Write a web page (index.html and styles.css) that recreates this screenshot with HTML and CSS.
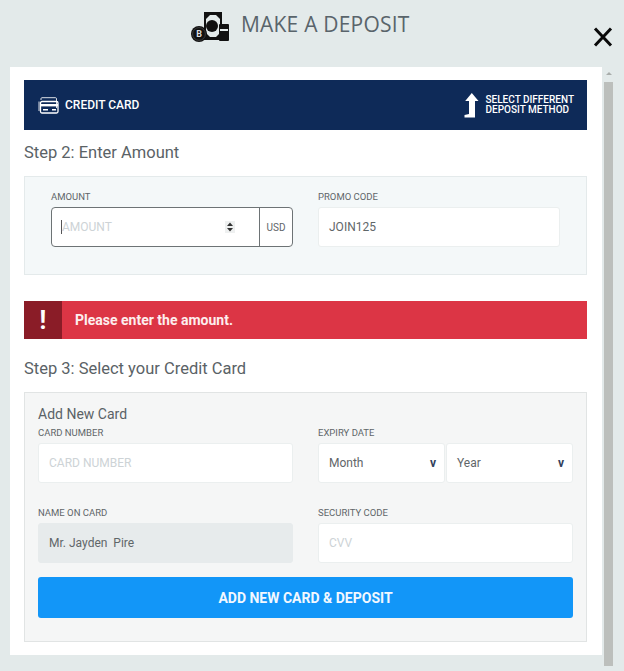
FILE: index.html
```html
<!DOCTYPE html>
<html lang="en">
<head>
    <meta charset="UTF-8">
    <meta name="viewport" content="width=device-width, initial-scale=1.0">
    <title>Make a Deposit</title>
    <link rel="stylesheet" href="styles.css">
</head>
<body>
    <div class="header">
        <svg class="header-icon" width="38" height="30" viewBox="0 0 38 30">
            <rect x="13" y="0" width="18" height="28" fill="#111"/>
            <rect x="15" y="3" width="14" height="22" fill="#e3eaea"/>
            <path d="M15 3h4l-4 4zM29 3v4l-4-4zM15 25v-4l4 4zM29 25h-4l4-4z" fill="#111"/>
            <circle cx="21" cy="14" r="6" fill="#111"/>
            <rect x="28" y="12" width="10" height="17" rx="1" fill="#111"/>
            <rect x="29" y="17" width="8" height="2" fill="#e3eaea"/>
            <circle cx="8" cy="22" r="8" fill="#111"/>
            <circle cx="8" cy="22" r="6.4" fill="none" stroke="#555" stroke-width=".6"/>
            <text x="8" y="25" class="coin-letter">B</text>
        </svg>
        <h1>MAKE A DEPOSIT</h1>
        <svg class="close-btn" width="22" height="22" viewBox="0 0 22 22">
            <path d="M3 2.5l16 17M19 2.5l-16 17" stroke="#0a0a0a" stroke-width="3" fill="none"/>
        </svg>
    </div>

    <div class="modal">
        <div class="panel">
            <div class="method-bar">
                <div class="method-name">
                    <svg width="22" height="17" viewBox="0 0 22 17">
                        <path d="M4 3V1.6C4 1 4.5.7 5 .7h13.500c.6 0 1 .4 1 1V11" fill="none" stroke="#fff" stroke-width="1" opacity=".85"/>
                        <path d="M2 4.500V14" fill="none" stroke="#fff" stroke-width="1" opacity=".85"/>
                        <rect x="3.500" y="4.500" width="17.500" height="11.500" rx="1.500" fill="none" stroke="#fff" stroke-width="1.300"/>
                        <rect x="3.500" y="7" width="17.500" height="2.400" fill="#fff"/>
                        <rect x="6" y="12" width="5" height="1.500" fill="#fff"/>
                        <rect x="15" y="12" width="4" height="1.500" fill="#fff"/>
                    </svg>
                    <span>CREDIT CARD</span>
                </div>
                <div class="method-change">
                    <svg width="15" height="25" viewBox="0 0 15 25">
                        <path d="M7.800 0L14.500 8H11V24.500H0.500V22L5 21V8H1.200z" fill="#fff"/>
                    </svg>
                    <span>SELECT DIFFERENT<br>DEPOSIT METHOD</span>
                </div>
            </div>

            <h2 class="step-title step-two">Step 2: Enter Amount</h2>

            <div class="amount-box">
                <div class="field">
                    <div class="field-label">AMOUNT</div>
                    <div class="amount-group">
                        <div class="amount-input">
                            <span class="caret"></span>
                            <span class="placeholder">AMOUNT</span>
                            <svg class="spinner" width="10" height="12" viewBox="0 0 10 12">
                                <rect width="10" height="12" fill="#eef0f0"/>
                                <path d="M5 1.500L8 5H2zM5 10.500L2 7H8z" fill="#333"/>
                            </svg>
                        </div>
                        <div class="amount-unit">USD</div>
                    </div>
                </div>
                <div class="field">
                    <div class="field-label">PROMO CODE</div>
                    <div class="text-input">JOIN125</div>
                </div>
            </div>

            <div class="alert">
                <div class="alert-icon">!</div>
                <div class="alert-text">Please enter the amount.</div>
            </div>

            <h2 class="step-title step-three">Step 3: Select your Credit Card</h2>

            <div class="card-box">
                <div class="card-title">Add New Card</div>
                <div class="card-grid">
                    <div class="field">
                        <div class="field-label">CARD NUMBER</div>
                        <div class="text-input placeholder">CARD NUMBER</div>
                    </div>
                    <div class="field">
                        <div class="field-label">EXPIRY DATE</div>
                        <div class="expiry">
                            <div class="text-input select">Month<span class="chevron">v</span></div>
                            <div class="text-input select">Year<span class="chevron">v</span></div>
                        </div>
                    </div>
                    <div class="field">
                        <div class="field-label">NAME ON CARD</div>
                        <div class="text-input disabled">Mr. Jayden&nbsp; Pire</div>
                    </div>
                    <div class="field">
                        <div class="field-label">SECURITY CODE</div>
                        <div class="text-input placeholder">CVV</div>
                    </div>
                </div>
                <button class="submit-btn">ADD NEW CARD &amp; DEPOSIT</button>
            </div>
        </div>

        <div class="scrollbar">
            <div class="scroll-arrow"></div>
            <div class="scroll-thumb"></div>
        </div>
    </div>
    <div class="next-panel"></div>
</body>
</html>
```

FILE: styles.css
```css
html, body {
    height: 671px;
    overflow: hidden;
}
body {
    font-family: Roboto, "Liberation Sans", sans-serif;
    margin: 0;
    background-color: #e3eaea;
    color: #555c60;
}
.header {
    position: relative;
    height: 67px;
    box-sizing: border-box;
    padding: 12px 0 0 191px;
    display: flex;
    align-items: flex-start;
    gap: 12px;
}
.header-icon {
    flex: none;
}
.coin-letter {
    font-family: Roboto, sans-serif;
    font-size: 9px;
    font-weight: bold;
    fill: #ddd;
    text-anchor: middle;
}
.header h1 {
    margin: 0;
    font-family: "Open Sans", sans-serif;
    font-size: 21px;
    line-height: 24px;
    font-weight: 400;
    color: #59646b;
    letter-spacing: 0.2px;
}
.close-btn {
    position: absolute;
    left: 592px;
    top: 26px;
}
.modal {
    display: flex;
    align-items: flex-start;
    margin-left: 10px;
}
.panel {
    width: 592px;
    height: 588px;
    box-sizing: border-box;
    padding: 13px 15px 0 14px;
    background: white;
}
.method-bar {
    display: flex;
    justify-content: space-between;
    align-items: center;
    height: 50px;
    box-sizing: border-box;
    padding: 0 13px;
    background: #0e2a58;
    color: white;
}
.method-name {
    display: flex;
    align-items: center;
    gap: 6px;
    font-size: 12px;
    font-weight: 500;
}
.method-change {
    display: flex;
    align-items: center;
    gap: 6px;
    font-size: 10px;
    font-weight: 500;
    line-height: 10px;
}
.step-title {
    margin: 0;
    font-size: 16.500px;
    font-weight: 400;
    line-height: 22px;
    color: #5a6266;
}
.step-two {
    padding: 12px 0;
}
.step-three {
    padding: 19px 0 12px;
}
.amount-box {
    display: grid;
    grid-template-columns: 242px 242px;
    column-gap: 25px;
    height: 99px;
    box-sizing: border-box;
    padding: 13px 0 0 26px;
    background: #f4f8f9;
    border: 1px solid #e4eaeb;
}
.field-label {
    font-size: 9.500px;
    line-height: 14px;
    margin-bottom: 3px;
    color: #5f6669;
}
.amount-group {
    display: flex;
    height: 40px;
    box-sizing: border-box;
    border: 1.500px solid #6d7375;
    border-radius: 4px;
    background: white;
}
.amount-input {
    flex: 1;
    display: flex;
    align-items: center;
    padding-left: 9px;
    font-size: 12px;
    border-right: 1.500px solid #6d7375;
}
.caret {
    width: 1px;
    height: 14px;
    background: #555;
}
.spinner {
    margin-left: auto;
    margin-right: 24px;
}
.amount-unit {
    width: 32px;
    display: flex;
    align-items: center;
    justify-content: center;
    font-size: 10px;
    color: #5f6669;
}
.placeholder {
    color: #cdd3d6;
}
.text-input {
    height: 40px;
    box-sizing: border-box;
    padding: 0 10px;
    display: flex;
    align-items: center;
    font-size: 12px;
    color: #5f6669;
    background: white;
    border: 1px solid #ebefef;
    border-radius: 3px;
}
.text-input.placeholder {
    color: #cdd3d6;
}
.text-input.disabled {
    background: #e7ebec;
    border-color: #e7ebec;
}
.alert {
    display: flex;
    align-items: center;
    height: 38px;
    margin-top: 26px;
    background: #dc3545;
    color: #fdeeee;
}
.alert-icon {
    width: 38px;
    height: 38px;
    display: flex;
    align-items: center;
    justify-content: center;
    background: #8a1c27;
    color: white;
    font-size: 25px;
    font-weight: 700;
}
.alert-text {
    padding-left: 13px;
    font-size: 14px;
    font-weight: 700;
}
.card-box {
    height: 250px;
    box-sizing: border-box;
    padding: 12px 13px 0;
    background: #f5f6f6;
    border: 1px solid #e1e4e4;
}
.card-title {
    font-size: 14px;
    line-height: 18px;
    color: #5a6266;
}
.card-grid {
    display: grid;
    grid-template-columns: 255px 255px;
    column-gap: 25px;
    row-gap: 23px;
    margin-top: 3px;
}
.expiry {
    display: flex;
    gap: 1px;
}
.select {
    flex: 1;
    justify-content: space-between;
    padding-right: 8px;
}
.chevron {
    font-size: 12px;
    font-weight: 700;
    color: #33415c;
}
.submit-btn {
    display: block;
    width: 100%;
    height: 41px;
    margin-top: 14px;
    border: none;
    border-radius: 3px;
    background: #1296f8;
    color: #f2f8ff;
    font-family: Roboto, sans-serif;
    font-size: 14px;
    font-weight: 700;
}
.scrollbar {
    width: 11px;
    margin-left: 1px;
    margin-top: 1px;
}
.scroll-arrow {
    width: 0;
    height: 0;
    margin: 4px auto 7px;
    border-left: 3px solid transparent;
    border-right: 3px solid transparent;
    border-bottom: 3px solid #a9adab;
}
.scroll-thumb {
    width: 9px;
    height: 584px;
    margin: 0 auto;
    background: #bcbfbc;
}
.next-panel {
    width: 592px;
    height: 3px;
    margin: 13px 0 0 10px;
    background: white;
}
```
